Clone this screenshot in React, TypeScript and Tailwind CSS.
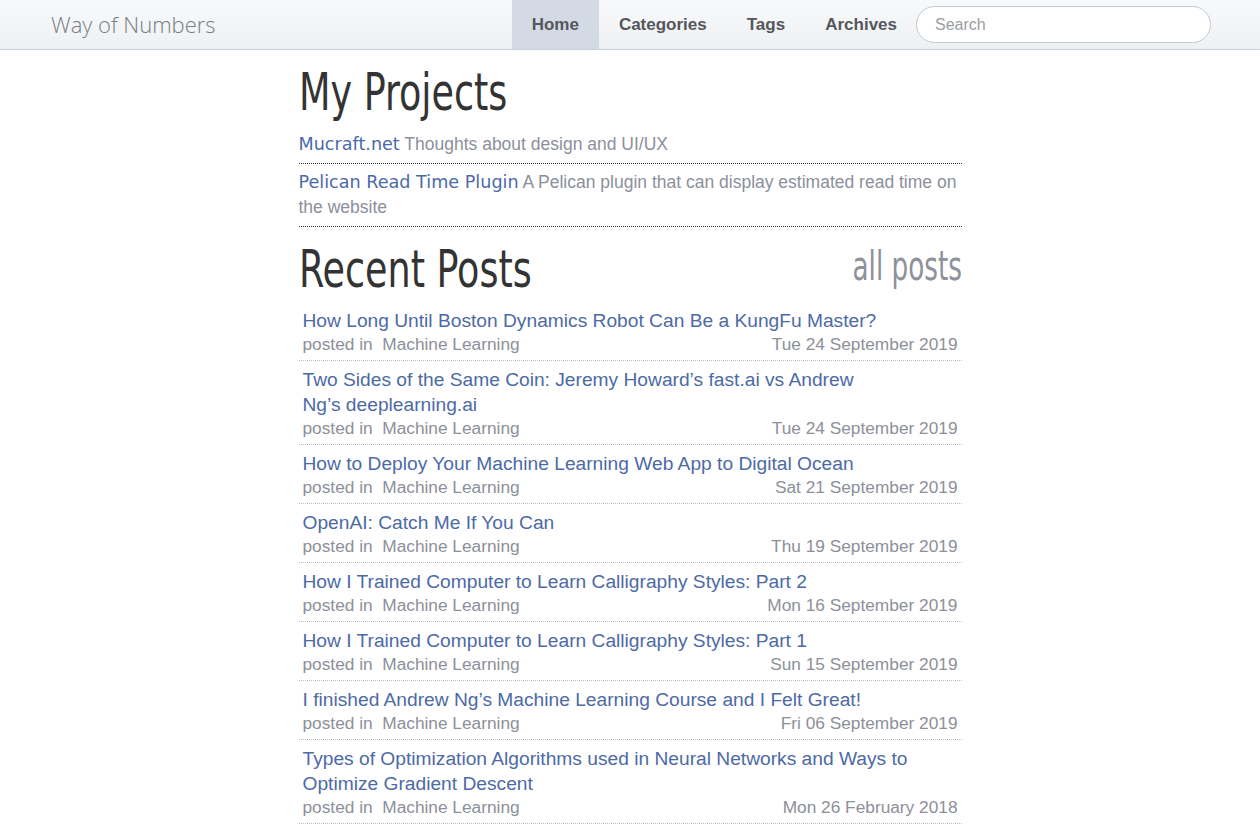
const projects = [
  { name: 'Mucraft.net', desc: 'Thoughts about design and UI/UX' },
  { name: 'Pelican Read Time Plugin', desc: 'A Pelican plugin that can display estimated read time on the website' },
];

const posts = [
  { title: ['How Long Until Boston Dynamics Robot Can Be a KungFu Master?'], date: 'Tue 24 September 2019' },
  { title: ['Two Sides of the Same Coin: Jeremy Howard’s fast.ai vs Andrew', 'Ng’s deeplearning.ai'], date: 'Tue 24 September 2019' },
  { title: ['How to Deploy Your Machine Learning Web App to Digital Ocean'], date: 'Sat 21 September 2019' },
  { title: ['OpenAI: Catch Me If You Can'], date: 'Thu 19 September 2019' },
  { title: ['How I Trained Computer to Learn Calligraphy Styles: Part 2'], date: 'Mon 16 September 2019' },
  { title: ['How I Trained Computer to Learn Calligraphy Styles: Part 1'], date: 'Sun 15 September 2019' },
  { title: ['I finished Andrew Ng’s Machine Learning Course and I Felt Great!'], date: 'Fri 06 September 2019' },
  { title: ['Types of Optimization Algorithms used in Neural Networks and Ways to', 'Optimize Gradient Descent'], date: 'Mon 26 February 2018' },
];

// condensed headings, squeezed to look like the narrow display face
const headingFont = "font-['DejaVu_Sans_Condensed',sans-serif]";

function Navbar() {
  const items = ['Home', 'Categories', 'Tags', 'Archives'];
  return (
    <header className="h-[50px] border-b border-[#c9d0da] bg-gradient-to-b from-[#f8f9fa] to-[#eef1f3] flex items-center">
      <a className="ml-[51px] text-[22px] font-light text-[#7a7d83] font-['Open_Sans',sans-serif]">Way of Numbers</a>
      <nav className="ml-auto flex h-full items-stretch">
        {items.map((item) => (
          <a
            key={item}
            className={`flex items-center px-5 text-[17px] font-bold text-[#55575d] font-['Liberation_Sans',sans-serif] ${
              item === 'Home' ? 'bg-[#d4dae3]' : ''
            }`}
          >
            {item}
          </a>
        ))}
      </nav>
      <div className="ml-[-1px] mr-[49px] flex items-center">
        <input
          className="h-[37px] w-[295px] rounded-full border border-[#c3cad6] bg-white px-[18px] text-[16px] outline-none placeholder:text-[#9a9da3] font-['Liberation_Sans',sans-serif]"
          placeholder="Search"
        />
      </div>
    </header>
  );
}

export default function App() {
  return (
    <div className="min-h-screen bg-white font-['Liberation_Sans',Arial,sans-serif]">
      <Navbar />
      <main className="mx-auto w-[663px]">
        <h1 className={`${headingFont} mt-[12px] mb-[3px] h-[60px] text-[52px] leading-[60px] text-[#333] whitespace-nowrap`}>
          <span className="inline-block origin-left scale-x-[0.78]">My Projects</span>
        </h1>
        <ul>
          {projects.map((p) => (
            <li key={p.name} className="border-b border-dotted border-[#333] pt-[6.5px] pb-[6px] text-[17.5px] leading-[25px]">
              <a className="text-[#4b6aa8] font-['DejaVu_Sans',sans-serif] text-[17.6px]">{p.name}</a>{' '}
              <span className="text-[#8b909c]">{p.desc}</span>
            </li>
          ))}
        </ul>
        <div className="flex items-start justify-between h-[75px]">
          <h2 className={`${headingFont} mt-[12px] text-[52px] leading-[60px] text-[#333] whitespace-nowrap`}>
            <span className="inline-block origin-left scale-x-[0.78]">Recent Posts</span>
          </h2>
          <a className={`${headingFont} mt-[14px] text-[40px] leading-[50px] text-[#8e919a] whitespace-nowrap`}>
            <span className="inline-block origin-right scale-x-[0.73]">all posts</span>
          </a>
        </div>
        <ul>
          {posts.map((post) => (
            <li key={post.date + post.title[0]} className="border-b border-dotted border-[#b9bdc5] px-1 pt-[6px] pb-[5px]">
              <a className="block text-[19.2px] leading-[25px] text-[#4d6aa6]">
                {post.title.map((line) => (
                  <span key={line} className="block whitespace-nowrap">{line}</span>
                ))}
              </a>
              <div className="flex justify-between text-[17.3px] leading-[22px] text-[#8d9099]">
                <span>posted in&nbsp; Machine Learning</span>
                <span>{post.date}</span>
              </div>
            </li>
          ))}
        </ul>
      </main>
    </div>
  );
}
